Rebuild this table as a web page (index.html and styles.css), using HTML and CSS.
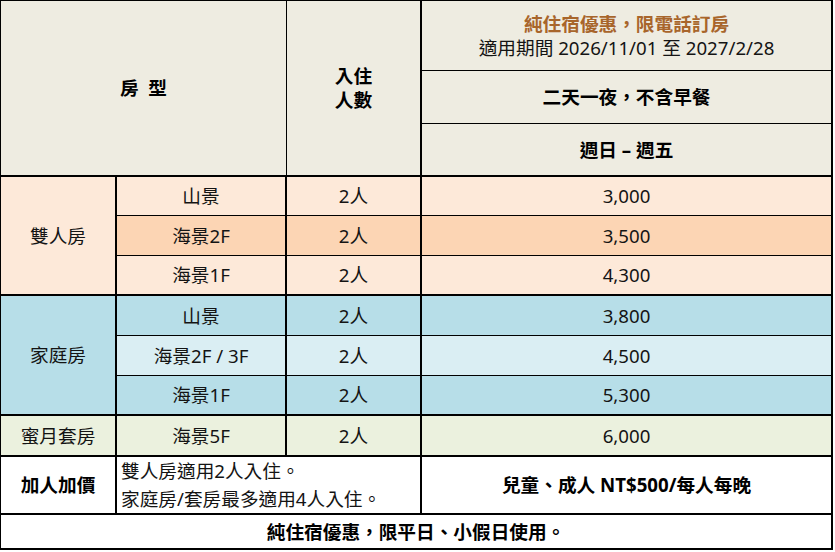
FILE: index.html
```html
<!DOCTYPE html>
<html lang="zh-Hant">
<head>
<meta charset="utf-8">
<title>純住宿優惠</title>
<link rel="stylesheet" href="styles.css">
</head>
<body>
<table class="rates">
  <colgroup>
    <col class="c1"><col class="c2"><col class="c3"><col class="c4">
  </colgroup>
  <tr class="ha">
    <td class="hd th-type strong bb2" colspan="2" rowspan="3">房&nbsp;&nbsp;型</td>
    <td class="hd strong bb2" rowspan="3">入住<br>人數</td>
    <td class="hd title-cell"><div class="promo">純住宿優惠，限電話訂房</div><div>適用期間 2026/11/01 至 2027/2/28</div></td>
  </tr>
  <tr class="hb">
    <td class="hd strong">二天一夜，不含早餐</td>
  </tr>
  <tr class="hc">
    <td class="hd strong bb2">週日 – 週五</td>
  </tr>

  <tr class="r39">
    <td class="pk bb2" rowspan="3">雙人房</td>
    <td class="pk">山景</td>
    <td class="pk">2人</td>
    <td class="pk">3,000</td>
  </tr>
  <tr class="r40">
    <td class="pk2">海景2F</td>
    <td class="pk2">2人</td>
    <td class="pk2">3,500</td>
  </tr>
  <tr class="r40">
    <td class="pk bb2">海景1F</td>
    <td class="pk bb2">2人</td>
    <td class="pk bb2">4,300</td>
  </tr>

  <tr class="r40">
    <td class="bl bb2" rowspan="3">家庭房</td>
    <td class="bl">山景</td>
    <td class="bl">2人</td>
    <td class="bl">3,800</td>
  </tr>
  <tr class="r40">
    <td class="bl2">海景2F / 3F</td>
    <td class="bl2">2人</td>
    <td class="bl2">4,500</td>
  </tr>
  <tr class="r40">
    <td class="bl bb2">海景1F</td>
    <td class="bl bb2">2人</td>
    <td class="bl bb2">5,300</td>
  </tr>

  <tr class="r41">
    <td class="gr bb2">蜜月套房</td>
    <td class="gr bb2">海景5F</td>
    <td class="gr bb2">2人</td>
    <td class="gr bb2">6,000</td>
  </tr>

  <tr class="r58">
    <td class="wh strong bb2">加人加價</td>
    <td class="wh note bb2" colspan="2">雙人房適用2人入住。<br>家庭房/套房最多適用4人入住。</td>
    <td class="wh strong bb2">兒童、成人 NT$500/每人每晚</td>
  </tr>
  <tr class="r35">
    <td class="wh strong bb2" colspan="4">純住宿優惠，限平日、小假日使用。</td>
  </tr>
</table>
</body>
</html>
```

FILE: styles.css
```css
html, body {
  margin: 0;
  padding: 0;
  background: #ffffff;
}

body {
  font-family: "Noto Sans", "Noto Sans CJK TC", sans-serif;
  font-size: 18.67px;
  color: #141414;
}

.rates {
  border-collapse: separate;
  border-spacing: 0;
  table-layout: fixed;
  width: 833px;
  border-top: 1px solid #000;
  border-left: 1px solid #000;
}

.c1 { width: 116px; }
.c2 { width: 170px; }
.c3 { width: 135px; }
.c4 { width: 411px; }

.rates td {
  box-sizing: border-box;
  padding: 0;
  border-right: 2px solid #000;
  border-bottom: 1px solid #000;
  text-align: center;
  vertical-align: middle;
  line-height: 24px;
  white-space: nowrap;
}

.rates td.bb2 { border-bottom-width: 2px; }
.rates td.th-type { border-right-width: 1px; }

.ha { height: 70px; }
.hb { height: 53px; }
.hc { height: 53px; }
.r35 { height: 35px; }
.r39 { height: 39px; }
.r40 { height: 40px; }
.r41 { height: 41px; }
.r58 { height: 58px; }

.hd  { background: #eeece1; }
.pk  { background: #fde9d9; }
.pk2 { background: #fcd5b4; }
.bl  { background: #b7dee8; }
.bl2 { background: #daeef3; }
.gr  { background: #ebf1de; }
.wh  { background: #ffffff; }

.strong { font-weight: 700; color: #000; }

.title-cell { line-height: 26px; }
.promo { color: #a8652b; font-weight: 700; }

.rates td.note {
  text-align: left;
  padding-left: 4px;
  line-height: 28px;
}
```
